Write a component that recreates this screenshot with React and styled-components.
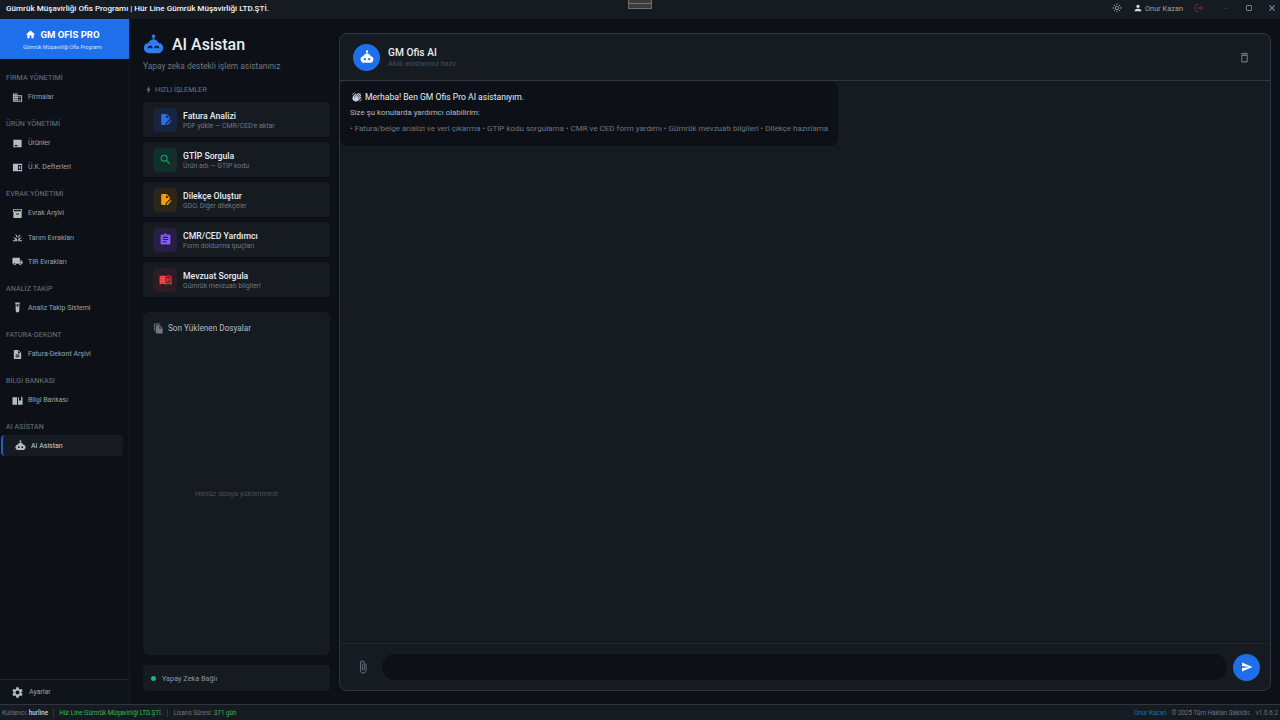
import React from "react";
import styled, { createGlobalStyle } from "styled-components";
import {
  MdAssignment,
  MdAttachFile,
  MdBolt,
  MdClose,
  MdCropSquare,
  MdDeleteOutline,
  MdDescription,
  MdDomain,
  MdEditDocument,
  MdFileCopy,
  MdGrass,
  MdHome,
  MdInventory2,
  MdLocalShipping,
  MdLogout,
  MdMenuBook,
  MdOutlineLightMode,
  MdPerson,
  MdRemove,
  MdSearch,
  MdSend,
  MdSettings,
  MdWavingHand,
} from "react-icons/md";

// the dome shaped robot used for the assistant
const RobotIcon = ({ size = 12, eyes = "#161b22", arcs = false }) => (
  <svg width={size} height={size} viewBox="0 0 24 24" fill="currentColor">
    <circle cx="12" cy="2.6" r="2" />
    <rect x="11.2" y="3" width="1.6" height="4" />
    <path d="M5.5 12C6 8.5 8.5 6.2 12 6.2s6 2.3 6.5 5.8z" />
    <path d="M5.5 10.5h13c2.6 0 4.5 2.4 4.5 5.2 0 3.6-2.6 6.3-6 6.3H7c-3.4 0-6-2.7-6-6.3 0-2.8 1.9-5.2 4.5-5.2z" />
    {arcs ? (
      <g fill="none" stroke={eyes} strokeWidth="1.8" strokeLinecap="round">
        <path d="M6.5 15.5c.8-1.6 2.8-1.6 3.6 0" />
        <path d="M13.9 15.5c.8-1.6 2.8-1.6 3.6 0" />
      </g>
    ) : (
      <g fill={eyes}>
        <circle cx="8.2" cy="15.6" r="2" />
        <circle cx="15.8" cy="15.6" r="2" />
      </g>
    )}
  </svg>
);

const ProductsIcon = ({ size }) => (
  <svg width={size} height={size} viewBox="0 0 24 24" fill="currentColor">
    <path fillRule="evenodd" d="M3 4h18v16H3zM6 15v3h6v-3z" />
  </svg>
);

const LedgerIcon = ({ size }) => (
  <svg width={size} height={size} viewBox="0 0 24 24" fill="currentColor">
    <path fillRule="evenodd" d="M2 4h20v16H2zM13 6.500v11h7v-11zM15 9.500h3v5h-3z" />
  </svg>
);

const TubeIcon = ({ size }) => (
  <svg width={size} height={size} viewBox="0 0 24 24" fill="currentColor">
    <path fillRule="evenodd" d="M7 1h10v3h-1v15a4 4 0 0 1-8 0V4H7zM10 5v5h4V5z" />
  </svg>
);

const BankIcon = ({ size }) => (
  <svg width={size} height={size} viewBox="0 0 24 24" fill="currentColor">
    <path d="M1 5h10v16H1zM13 5h2v8l2.500-2 2.500 2V2h1v3h2v16H13z" />
  </svg>
);

const sections = [
  { title: "FİRMA YÖNETİMİ", items: [{ label: "Firmalar", icon: MdDomain }] },
  {
    title: "ÜRÜN YÖNETİMİ",
    items: [
      { label: "Ürünler", icon: ProductsIcon },
      { label: "Ü.K. Defterleri", icon: LedgerIcon },
    ],
  },
  {
    title: "EVRAK YÖNETİMİ",
    items: [
      { label: "Evrak Arşivi", icon: MdInventory2 },
      { label: "Tarım Evrakları", icon: MdGrass },
      { label: "TIR Evrakları", icon: MdLocalShipping },
    ],
  },
  { title: "ANALİZ TAKİP", items: [{ label: "Analiz Takip Sistemi", icon: TubeIcon }] },
  { title: "FATURA-DEKONT", items: [{ label: "Fatura-Dekont Arşivi", icon: MdDescription }] },
  { title: "BİLGİ BANKASI", items: [{ label: "Bilgi Bankası", icon: BankIcon }] },
  { title: "AI ASİSTAN", items: [{ label: "AI Asistan", icon: RobotIcon, active: true }] },
];

const actions = [
  { title: "Fatura Analizi", sub: "PDF yükle — CMR/CED'e aktar", icon: MdEditDocument, color: "#2f6fde", tint: "#17253f" },
  { title: "GTİP Sorgula", sub: "Ürün adı — GTİP kodu", icon: MdSearch, color: "#10a56f", tint: "#12302b" },
  { title: "Dilekçe Oluştur", sub: "GDO, Diğer dilekçeler", icon: MdEditDocument, color: "#f59e0b", tint: "#2c2618" },
  { title: "CMR/CED Yardımcı", sub: "Form doldurma ipuçları", icon: MdAssignment, color: "#8b5cf6", tint: "#261f42" },
  { title: "Mevzuat Sorgula", sub: "Gümrük mevzuatı bilgileri", icon: MdMenuBook, color: "#ef4444", tint: "#2e1c22" },
];

const GlobalStyle = createGlobalStyle`
  html, body {
    margin: 0;
    padding: 0;
    height: 100%;
    background: #0d1117;
  }
  #root {
    height: 100%;
  }
  * {
    box-sizing: border-box;
  }
`;

const App = () => {
  return (
    <>
      <GlobalStyle />
      <Page>
        <TitleBar>
          <AppTitle>Gümrük Müşavirliği Ofis Programı | Hür Line Gümrük Müşavirliği LTD.ŞTİ.</AppTitle>
          <DragHandle />
          <TitleActions>
            <ThemeIcon />
            <UserBox>
              <MdPerson size={10} />
              <span>Onur Kazan</span>
            </UserBox>
            <LogoutIcon />
            <WindowButton $dim>
              <MdRemove size={9} />
            </WindowButton>
            <WindowButton>
              <MdCropSquare size={8} />
            </WindowButton>
            <WindowButton>
              <MdClose size={10} />
            </WindowButton>
          </TitleActions>
        </TitleBar>

        <Body>
          <Sidebar>
            <Brand>
              <BrandName>
                <MdHome size={11} />
                GM OFİS PRO
              </BrandName>
              <BrandSub>Gümrük Müşavirliği Ofis Programı</BrandSub>
            </Brand>
            <Nav>
              {sections.map((section) => (
                <NavSection key={section.title}>
                  <NavLabel>{section.title}</NavLabel>
                  {section.items.map((item) => (
                    <NavItem key={item.label} $active={item.active}>
                      <item.icon size={11} />
                      <span>{item.label}</span>
                    </NavItem>
                  ))}
                </NavSection>
              ))}
            </Nav>
            <SidebarFooter>
              <MdSettings size={13} />
              <span>Ayarlar</span>
            </SidebarFooter>
          </Sidebar>

          <Main>
            <LeftColumn>
              <PageTitle>
                <TitleRobot>
                  <RobotIcon size={21} eyes="#0d1117" arcs />
                </TitleRobot>
                <h1>AI Asistan</h1>
              </PageTitle>
              <PageSub>Yapay zeka destekli işlem asistanınız</PageSub>
              <QuickLabel>
                <MdBolt size={9} />
                HIZLI İŞLEMLER
              </QuickLabel>
              <ActionList>
                {actions.map((action) => (
                  <ActionCard key={action.title}>
                    <ActionIcon $tint={action.tint} $color={action.color}>
                      <action.icon size={13} />
                    </ActionIcon>
                    <ActionText>
                      <ActionTitle>{action.title}</ActionTitle>
                      <ActionSub>{action.sub}</ActionSub>
                    </ActionText>
                  </ActionCard>
                ))}
              </ActionList>
              <FilesCard>
                <FilesTitle>
                  <MdFileCopy size={11} />
                  Son Yüklenen Dosyalar
                </FilesTitle>
                <FilesEmpty>Henüz dosya yüklenmedi</FilesEmpty>
              </FilesCard>
              <ConnectionCard>
                <Dot />
                Yapay Zeka Bağlı
              </ConnectionCard>
            </LeftColumn>

            <ChatPanel>
              <ChatHeader>
                <Avatar>
                  <RobotIcon size={14} eyes="#1f6feb" />
                </Avatar>
                <ChatHeaderText>
                  <ChatName>GM Ofis AI</ChatName>
                  <ChatStatus>Akıllı asistanınız hazır</ChatStatus>
                </ChatHeaderText>
                <TrashButton>
                  <MdDeleteOutline size={13} />
                </TrashButton>
              </ChatHeader>
              <Messages>
                <Bubble>
                  <BubbleHello>
                    <MdWavingHand size={10} />
                    Merhaba! Ben GM Ofis Pro AI asistanıyım.
                  </BubbleHello>
                  <BubbleLine>Size şu konularda yardımcı olabilirim:</BubbleLine>
                  <BubbleList>
                    • Fatura/belge analizi ve veri çıkarma • GTİP kodu sorgulama • CMR ve CED form yardımı • Gümrük mevzuatı bilgileri • Dilekçe hazırlama
                  </BubbleList>
                </Bubble>
              </Messages>
              <Composer>
                <AttachButton>
                  <MdAttachFile size={14} />
                </AttachButton>
                <ChatInput />
                <SendButton>
                  <MdSend size={12} />
                </SendButton>
              </Composer>
            </ChatPanel>
          </Main>
        </Body>

        <StatusBar>
          <StatusGroup>
            <span>
              Kullanıcı: <StatusStrong>hurline</StatusStrong>
            </span>
            <StatusDivider />
            <StatusGreen>Hür Line Gümrük Müşavirliği LTD.ŞTİ.</StatusGreen>
            <StatusDivider />
            <span>
              Lisans Süresi: <StatusGreen>371 gün</StatusGreen>
            </span>
          </StatusGroup>
          <StatusRight>
            <StatusLink>Onur Kazan</StatusLink>
            <span>© 2025 Tüm Hakları Saklıdır.</span>
            <span>v1.0.6.2</span>
          </StatusRight>
        </StatusBar>
      </Page>
    </>
  );
};

export default App;

const Page = styled.div`
  display: flex;
  flex-direction: column;
  width: 1280px;
  height: 720px;
  overflow: hidden;
  background: #0d1117;
  font-family: Roboto, "Noto Sans", sans-serif;
  color: #e6edf3;
`;

const TitleBar = styled.header`
  position: relative;
  display: flex;
  align-items: center;
  justify-content: space-between;
  flex: none;
  height: 19px;
  padding: 0 6px;
  background: #161b22;
`;

const AppTitle = styled.div`
  margin-top: -4px;
  font-size: 8.1px;
  font-weight: 500;
  color: #f0f3f6;
`;

const DragHandle = styled.div`
  position: absolute;
  top: 0;
  left: 628px;
  width: 24px;
  height: 9px;
  border: 1px solid #6e6e6e;
  border-top: 0;
  background: linear-gradient(#3a3a38 0 3px, #77776f 3px 4px, #3a3a38 4px);
`;

const TitleActions = styled.div`
  display: flex;
  align-items: center;
  margin-top: -3px;
  color: #c9d1d9;
`;

const ThemeIcon = styled(MdOutlineLightMode).attrs({ size: 10 })`
  margin-right: 11px;
  color: #a8afb6;
`;

const UserBox = styled.div`
  display: flex;
  align-items: center;
  gap: 2px;
  margin-right: 11px;
  font-size: 7.4px;
  color: #9aa3ad;

  svg {
    color: #d8dde2;
  }
`;

const LogoutIcon = styled(MdLogout).attrs({ size: 10 })`
  margin-right: 10px;
  color: #7d2b33;
`;

const WindowButton = styled.div`
  display: flex;
  align-items: center;
  justify-content: center;
  width: 23px;
  color: ${(props) => (props.$dim ? "#30363d" : "#9aa3ad")};

  &:last-child {
    margin-right: -9px;
  }
`;

const Body = styled.div`
  display: flex;
  flex: 1;
  min-height: 0;
`;

const Sidebar = styled.aside`
  display: flex;
  flex-direction: column;
  flex: none;
  width: 130px;
  background: #0d1117;
  border-right: 1px solid #161b22;
`;

const Brand = styled.div`
  display: flex;
  flex-direction: column;
  align-items: center;
  justify-content: center;
  flex: none;
  height: 40px;
  padding-right: 4px;
  background: #1f6feb;
  color: #ffffff;
`;

const BrandName = styled.div`
  display: flex;
  align-items: center;
  gap: 4px;
  font-size: 9.6px;
  font-weight: 700;
  line-height: 13px;
`;

const BrandSub = styled.div`
  margin-top: 2px;
  font-size: 5.3px;
  line-height: 8px;
  color: #d5e4fb;
`;

const Nav = styled.nav`
  flex: 1;
  padding-top: 13px;
`;

const NavSection = styled.div`
  margin-bottom: 9px;
`;

const NavLabel = styled.div`
  height: 12px;
  margin-bottom: 1px;
  padding-left: 6px;
  font-size: 7.1px;
  line-height: 12px;
  letter-spacing: 0.1px;
  color: #6e7681;
`;

const NavItem = styled.div`
  position: relative;
  display: flex;
  align-items: center;
  gap: 5px;
  height: ${(props) => (props.$active ? "21px" : "24.15px")};
  margin: ${(props) => (props.$active ? "2px 6px 1px 1px" : "0 6px 0 0")};
  padding-left: 12px;
  border-radius: ${(props) => (props.$active ? "4px" : "0")};
  background: ${(props) => (props.$active ? "#161b22" : "transparent")};
  border-left: ${(props) => (props.$active ? "2px solid #1f5fc4" : "0")};
  font-size: 7px;
  color: ${(props) => (props.$active ? "#c9d1d9" : "#9aa3ad")};

  svg {
    flex: none;
    color: #b4bbc2;
  }
`;

const SidebarFooter = styled.div`
  display: flex;
  align-items: center;
  gap: 5px;
  flex: none;
  height: 25px;
  padding-left: 11px;
  border-top: 1px solid #21262d;
  background: #0f141b;
  font-size: 7px;
  color: #9aa3ad;

  svg {
    color: #b4bbc2;
  }
`;

const Main = styled.main`
  display: flex;
  flex: 1;
  gap: 9px;
  min-width: 0;
  padding: 14px 9px 13px 13px;
`;

const LeftColumn = styled.section`
  display: flex;
  flex-direction: column;
  flex: none;
  width: 187px;
`;

const PageTitle = styled.div`
  display: flex;
  align-items: center;
  gap: 8px;
  height: 22px;

  h1 {
    margin: 0;
    font-size: 16px;
    font-weight: 500;
    color: #e6edf3;
  }
`;

const TitleRobot = styled.span`
  display: flex;
  color: #2f7bf0;
`;

const PageSub = styled.div`
  margin-top: 4px;
  font-size: 8.4px;
  line-height: 14px;
  color: #6e7681;
`;

const QuickLabel = styled.div`
  display: flex;
  align-items: center;
  gap: 2px;
  height: 12px;
  margin-top: 10px;
  padding-left: 1px;
  font-size: 7.2px;
  color: #6e7681;
`;

const ActionList = styled.div`
  display: flex;
  flex-direction: column;
  gap: 5px;
  margin-top: 7px;
`;

const ActionCard = styled.div`
  display: flex;
  align-items: center;
  gap: 6px;
  height: 35px;
  padding-left: 10px;
  border-radius: 3px;
  background: #161b22;
`;

const ActionIcon = styled.div`
  display: flex;
  align-items: center;
  justify-content: center;
  width: 24px;
  height: 24px;
  border-radius: 5px;
  background: ${(props) => props.$tint};
  color: ${(props) => props.$color};
`;

const ActionText = styled.div`
  padding-top: 2px;
`;

const ActionTitle = styled.div`
  font-size: 8.7px;
  font-weight: 500;
  line-height: 11px;
  color: #e6edf3;
`;

const ActionSub = styled.div`
  font-size: 6.9px;
  line-height: 8px;
  color: #6e7681;
`;

const FilesCard = styled.div`
  display: flex;
  flex-direction: column;
  flex: 1;
  margin-top: 15px;
  padding: 10px;
  border-radius: 6px;
  background: #161b22;
`;

const FilesTitle = styled.div`
  display: flex;
  align-items: center;
  gap: 4px;
  height: 12px;
  font-size: 8.2px;
  color: #b4bbc2;

  svg {
    color: #6e7681;
  }
`;

const FilesEmpty = styled.div`
  display: flex;
  align-items: center;
  justify-content: center;
  flex: 1;
  padding-top: 8px;
  font-size: 7.5px;
  color: #484f58;
`;

const ConnectionCard = styled.div`
  display: flex;
  align-items: center;
  gap: 6px;
  flex: none;
  height: 26px;
  margin-top: 10px;
  padding-left: 8px;
  border-radius: 4px;
  background: #161b22;
  font-size: 7.3px;
  color: #8b949e;
`;

const Dot = styled.span`
  width: 5px;
  height: 5px;
  border-radius: 50%;
  background: #10b981;
`;

const ChatPanel = styled.section`
  display: flex;
  flex-direction: column;
  flex: 1;
  min-width: 0;
  overflow: hidden;
  border: 1px solid #30363d;
  border-radius: 8px;
  background: #161b22;
`;

const ChatHeader = styled.div`
  display: flex;
  align-items: center;
  gap: 8px;
  flex: none;
  height: 47px;
  padding: 0 19px 0 13px;
  border-bottom: 1px solid #30363d;
`;

const Avatar = styled.div`
  display: flex;
  align-items: center;
  justify-content: center;
  width: 27px;
  height: 27px;
  border-radius: 50%;
  background: #1f6feb;
  color: #ffffff;
`;

const ChatHeaderText = styled.div`
  flex: 1;
`;

const ChatName = styled.div`
  font-size: 10.2px;
  font-weight: 500;
  line-height: 13px;
  color: #e6edf3;
`;

const ChatStatus = styled.div`
  font-size: 7.1px;
  line-height: 10px;
  color: #484f58;
`;

const TrashButton = styled.div`
  display: flex;
  color: #6e7681;
`;

const Messages = styled.div`
  display: flex;
  flex-direction: column;
  align-items: flex-start;
  flex: 1;
  min-height: 0;
`;

const Bubble = styled.div`
  padding: 9px 10px 10px;
  border-radius: 8px;
  background: #0d1117;
`;

const BubbleHello = styled.div`
  display: flex;
  align-items: center;
  gap: 3px;
  height: 14px;
  margin-bottom: 2px;
  padding-left: 2px;
  font-size: 8.6px;
  color: #e6edf3;

  svg {
    color: #c9d1d9;
  }
`;

const BubbleLine = styled.div`
  height: 14px;
  margin-bottom: 2px;
  font-size: 7.9px;
  line-height: 14px;
  color: #b4bbc2;
`;

const BubbleList = styled.div`
  height: 14px;
  font-size: 8px;
  line-height: 14px;
  white-space: nowrap;
  color: #6e7681;
`;

const Composer = styled.div`
  display: flex;
  align-items: center;
  flex: none;
  height: 47px;
  padding: 0 10px 0 13px;
  border-top: 1px solid #21262d;
`;

const AttachButton = styled.div`
  display: flex;
  justify-content: center;
  width: 20px;
  margin-right: 9px;
  color: #6e7681;
`;

const ChatInput = styled.div`
  flex: 1;
  height: 26px;
  border-radius: 13px;
  background: #0d1117;
`;

const SendButton = styled.div`
  display: flex;
  align-items: center;
  justify-content: center;
  width: 27px;
  height: 27px;
  margin-left: 6px;
  border-radius: 50%;
  background: #1f6feb;
  color: #ffffff;
`;

const StatusBar = styled.footer`
  display: flex;
  align-items: center;
  justify-content: space-between;
  flex: none;
  height: 16px;
  padding: 0 2px;
  border-top: 1px solid #30363d;
  background: #161b22;
  font-size: 6.3px;
  color: #6e7681;
`;

const StatusGroup = styled.div`
  display: flex;
  align-items: center;
  gap: 5px;
`;

const StatusStrong = styled.span`
  font-weight: 500;
  color: #c9d1d9;
`;

const StatusGreen = styled.span`
  color: #3fb950;
`;

const StatusDivider = styled.span`
  width: 1px;
  height: 8px;
  background: #30363d;
`;

const StatusRight = styled.div`
  display: flex;
  align-items: center;
  gap: 5px;
`;

const StatusLink = styled.span`
  color: #1f6fb5;
`;
